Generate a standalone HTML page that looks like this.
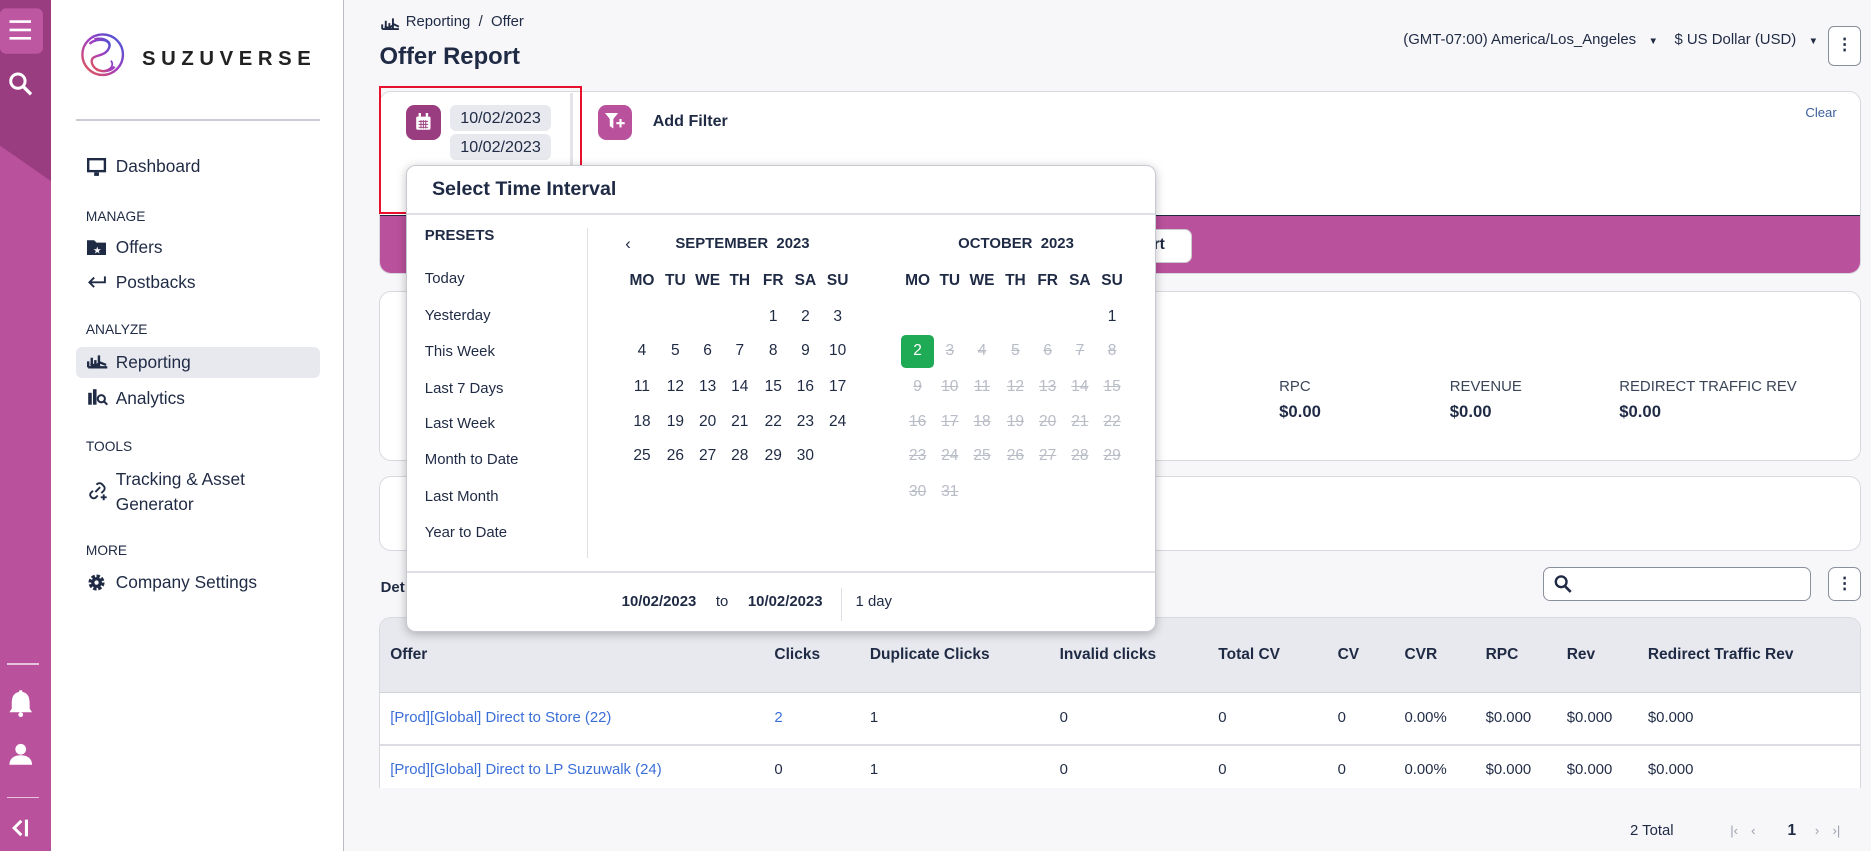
<!DOCTYPE html>
<html><head><meta charset="utf-8"><style>
*{box-sizing:border-box;margin:0;padding:0}
html,body{width:1871px;height:851px;overflow:hidden;background:#f7f7f9}
#r{position:absolute;left:0;top:0;width:1568px;height:713px;zoom:1.19324;font-family:"Liberation Sans",sans-serif;color:#1f2a44;background:#f7f7f9}
.a{position:absolute;white-space:nowrap}
.rail{left:0;top:0;width:43px;height:713px;background:#b9519c}
.side{left:43px;top:0;width:245px;height:713px;background:#fff;border-right:1px solid #b9bcc6}
.nav{font-size:14.5px;color:#1f2a44}
.sec{font-size:11.5px;color:#1f2a44}
.card{background:#fff;border:1px solid #d8d9df;border-radius:10px}
.th{font-size:13px;font-weight:bold;color:#1f2a44}
.td{font-size:12.5px;color:#1f2a44}
.ln{color:#3b6fd8}
.cal{font-size:13px;color:#1f2a44;text-align:center;width:24px}
.dis{color:#b8bcc6;text-decoration:line-through}
.pre{font-size:12.5px;color:#1f2a44}
</style></head><body><div id="r">
<div class="a rail"></div>
<svg class="a" style="left:0;top:0" width="43" height="160"><polygon points="0,0 43,0 43,152 0,122" fill="#9a3d80"/><rect x="0" y="7" width="36" height="38" rx="5" fill="#bd57a1"/><rect x="8" y="17" width="18" height="2.2" fill="#fff"/><rect x="8" y="24" width="18" height="2.2" fill="#fff"/><rect x="8" y="31" width="18" height="2.2" fill="#fff"/><circle cx="15" cy="68" r="6" fill="none" stroke="#fff" stroke-width="2.5"/><line x1="19.5" y1="72.5" x2="26" y2="79" stroke="#fff" stroke-width="2.8"/></svg>
<div class="a" style="left:6px;top:556px;width:27px;height:1px;background:#e6c4dc"></div>
<div class="a" style="left:6px;top:668px;width:27px;height:1px;background:#e6c4dc"></div>
<svg class="a" style="left:6px;top:575px" width="30" height="130"><path d="M10 5a1.5 1.5 0 0 1 3 0c5 1 6 5 6 10v4l2 3H2l2-3v-4c0-5 1-9 6-10z" fill="#fff"/><circle cx="11.5" cy="24" r="2" fill="#fff"/><circle cx="11.5" cy="53" r="4.5" fill="#fff"/><path d="M2 66c0-6 5-8 9.5-8s9.5 2 9.5 8z" fill="#fff"/><path d="M12 113l-6 6 6 6" stroke="#fff" stroke-width="2.5" fill="none"/><rect x="15" y="112" width="2.6" height="14" fill="#fff"/></svg>
<div class="a side"></div>
<svg class="a" style="left:67px;top:27px" width="38" height="38" viewBox="0 0 38 38"><defs><linearGradient id="g" x1="0" y1="1" x2="1" y2="0"><stop offset="0" stop-color="#e8584a"/><stop offset=".5" stop-color="#a33cc0"/><stop offset="1" stop-color="#3a5ad8"/></linearGradient></defs><circle cx="19" cy="19" r="17" fill="none" stroke="url(#g)" stroke-width="2"/><path d="M8 10c6-6 20-4 16 4s-16 4-14 12 14 9 19 3" fill="none" stroke="url(#g)" stroke-width="2"/><path d="M12 6c8-2 16 2 12 8M14 32c8 2 16-2 12-8" fill="none" stroke="url(#g)" stroke-width="1.5"/></svg>
<div class="a" style="left:119px;top:40px;font-size:17px;letter-spacing:4.7px;color:#222;font-weight:bold">SUZUVERSE</div>
<div class="a" style="left:64px;top:100px;width:204px;height:1px;background:#c9cbd3"></div>
<svg class="a" style="left:73px;top:132px" width="18" height="16"><rect x="1" y="1" width="14" height="10" fill="none" stroke="#1f2a44" stroke-width="2"/><rect x="6" y="12" width="4" height="3" fill="#1f2a44"/></svg>
<div class="a nav" style="left:97px;top:131px">Dashboard</div>
<div class="a sec" style="left:72px;top:175px">MANAGE</div>
<svg class="a" style="left:73px;top:200px" width="16" height="14"><path d="M0 1h6l2 2h8v11H0z" fill="#1f2a44"/><text x="5" y="12" font-size="8" fill="#fff">★</text></svg>
<div class="a nav" style="left:97px;top:199px">Offers</div>
<svg class="a" style="left:73px;top:230px" width="16" height="12"><path d="M15 2v5H2M6 3L2 7l4 4" stroke="#1f2a44" stroke-width="1.6" fill="none"/></svg>
<div class="a nav" style="left:97px;top:228px">Postbacks</div>
<div class="a sec" style="left:72px;top:270px">ANALYZE</div>
<div class="a" style="left:64px;top:291px;width:204px;height:26px;background:#e8e9ee;border-radius:5px"></div>
<svg class="a" style="left:73px;top:296px" width="18" height="14"><path d="M1 12V7M4 12V4M7 12V6M10 12V2M1 12h16M3 9l4 2 4-3 5 2" stroke="#1f2a44" stroke-width="2" fill="none"/></svg>
<div class="a nav" style="left:97px;top:295px">Reporting</div>
<svg class="a" style="left:73px;top:325px" width="18" height="16"><rect x="1" y="4" width="3" height="10" fill="#1f2a44"/><rect x="5" y="1" width="3" height="13" fill="#1f2a44"/><circle cx="12" cy="9" r="3" fill="none" stroke="#1f2a44" stroke-width="1.7"/><line x1="14" y1="11" x2="17" y2="14" stroke="#1f2a44" stroke-width="1.7"/></svg>
<div class="a nav" style="left:97px;top:325px">Analytics</div>
<div class="a sec" style="left:72px;top:368px">TOOLS</div>
<svg class="a" style="left:73px;top:402px" width="18" height="18"><path d="M8 4a3 3 0 0 1 5 0l1 1a3 3 0 0 1 0 4l-2 2M9 13l-2 2a3 3 0 0 1-4-4l2-2M7 10l4-4" stroke="#1f2a44" stroke-width="1.6" fill="none"/><path d="M14 12v5M11.5 14.5h5" stroke="#1f2a44" stroke-width="1.6"/></svg>
<div class="a nav" style="left:97px;top:391px;line-height:21px">Tracking &amp; Asset<br>Generator</div>
<div class="a sec" style="left:72px;top:455px">MORE</div>
<svg class="a" style="left:73px;top:480px" width="16" height="16"><circle cx="8" cy="8" r="5" fill="none" stroke="#1f2a44" stroke-width="3.5" stroke-dasharray="2.6 1.3"/><circle cx="8" cy="8" r="4.5" fill="#1f2a44"/><circle cx="8" cy="8" r="1.8" fill="#fff"/></svg>
<div class="a nav" style="left:97px;top:479px">Company Settings</div>

<svg class="a" style="left:319px;top:13px" width="16" height="12"><path d="M1 11V7M4 11V4M7 11V6M10 11V2M1 11h14M3 9l4 1 4-3 4 2" stroke="#1f2a44" stroke-width="1.6" fill="none"/></svg>
<div class="a" style="left:340px;top:12px;font-size:12.5px;color:#1f2a44">Reporting &nbsp;/&nbsp; Offer</div>
<div class="a" style="left:318px;top:36px;font-size:20px;font-weight:bold;color:#1f2a44">Offer Report</div>
<div class="a" style="left:1176px;top:27px;font-size:12.5px;color:#1f2a44">(GMT-07:00) America/Los_Angeles &nbsp;&nbsp;<span style="font-size:8px">▼</span> &nbsp;&nbsp; $ US Dollar (USD) &nbsp;&nbsp;<span style="font-size:8px">▼</span></div>
<div class="a" style="left:1532px;top:22px;width:28px;height:33px;border:1px solid #8a8f9c;border-radius:5px;background:#fff;text-align:center;font-weight:bold;font-size:14px;line-height:30px">⋮</div>

<div class="a card" style="left:318px;top:76px;width:1242px;height:154px;overflow:hidden">
<div class="a" style="left:0;top:103px;width:1242px;height:51px;background:#b9519c;border-top:1px solid #1f2a44"></div>
<div class="a" style="left:620px;top:115px;width:60px;height:29px;background:#fff;border-radius:6px;border:1px solid #ccc"></div>
<div class="a" style="left:640px;top:121px;font-size:13px;font-weight:bold">ort</div>
</div>
<div class="a" style="left:340px;top:88px;width:30px;height:29px;background:#9a3d80;border-radius:7px"></div>
<svg class="a" style="left:348px;top:95px" width="14" height="15"><rect x="1" y="3" width="12" height="11" fill="#fff" rx="1"/><rect x="3" y="0" width="2" height="3" fill="#fff"/><rect x="9" y="0" width="2" height="3" fill="#fff"/><path d="M3 7h8M3 9.5h8M3 12h8M5 6v7M7 6v7M9 6v7" stroke="#9a3d80" stroke-width=".8"/></svg>
<div class="a" style="left:377px;top:88px;width:85px;height:22px;background:#e8e9ee;border-radius:5px;font-size:13.5px;line-height:22px;text-align:center">10/02/2023</div>
<div class="a" style="left:377px;top:112px;width:85px;height:22px;background:#e8e9ee;border-radius:5px;font-size:13.5px;line-height:22px;text-align:center">10/02/2023</div>
<div class="a" style="left:478px;top:78px;width:2px;height:100px;background:#e3e4e8"></div>
<div class="a" style="left:501px;top:88px;width:29px;height:29px;background:#b9519c;border-radius:7px"></div>
<svg class="a" style="left:507px;top:95px" width="18" height="15"><path d="M0 0h11L7 5v8l-3 -2V5z" fill="#fff"/><path d="M13 5v7M9.5 8.5h7" stroke="#fff" stroke-width="1.8"/></svg>
<div class="a" style="left:547px;top:94px;font-size:13.5px;font-weight:bold">Add Filter</div>
<div class="a" style="left:1513px;top:88px;font-size:11px;color:#3b5f9a">Clear</div>
<div class="a" style="left:318px;top:72px;width:170px;height:107px;border:2px solid #e8112d"></div>

<div class="a card" style="left:318px;top:244px;width:1242px;height:142px"></div>
<div class="a" style="left:1072px;top:318px;font-size:12.5px;color:#3a4558">RPC</div>
<div class="a" style="left:1072px;top:337px;font-size:14px;font-weight:bold">$0.00</div>
<div class="a" style="left:1215px;top:318px;font-size:12.5px;color:#3a4558">REVENUE</div>
<div class="a" style="left:1215px;top:337px;font-size:14px;font-weight:bold">$0.00</div>
<div class="a" style="left:1357px;top:318px;font-size:12.5px;color:#3a4558">REDIRECT TRAFFIC REV</div>
<div class="a" style="left:1357px;top:337px;font-size:14px;font-weight:bold">$0.00</div>
<div class="a card" style="left:318px;top:399px;width:1242px;height:63px"></div>
<div class="a" style="left:319px;top:486px;font-size:12.5px;font-weight:bold">Det</div>
<div class="a" style="left:1293px;top:475px;width:225px;height:29px;background:#fff;border:1px solid #8a8f9c;border-radius:6px"></div>
<svg class="a" style="left:1302px;top:481px" width="16" height="17"><circle cx="6" cy="6.5" r="4.5" fill="none" stroke="#1f2a44" stroke-width="2"/><line x1="9" y1="10" x2="14" y2="15" stroke="#1f2a44" stroke-width="2.2"/></svg>
<div class="a" style="left:1532px;top:475px;width:28px;height:29px;border:1px solid #8a8f9c;border-radius:6px;background:#fff;text-align:center;font-weight:bold;font-size:14px;line-height:27px">⋮</div>

<div class="a" style="left:318px;top:517px;width:1242px;height:143px;background:#fff;border:1px solid #d8d9df;border-bottom:none;border-radius:10px 10px 0 0;overflow:hidden">
<div class="a" style="left:0;top:0;width:1242px;height:63px;background:#e8e9ee;border-bottom:1px solid #d0d2d8"></div>
<div class="a" style="left:0;top:106px;width:1242px;height:1px;background:#dcdde2"></div>
</div>
<div class="a th" style="left:327px;top:541px">Offer</div><div class="a th" style="left:649px;top:541px">Clicks</div><div class="a th" style="left:729px;top:541px">Duplicate Clicks</div><div class="a th" style="left:888px;top:541px">Invalid clicks</div><div class="a th" style="left:1021px;top:541px">Total CV</div><div class="a th" style="left:1121px;top:541px">CV</div><div class="a th" style="left:1177px;top:541px">CVR</div><div class="a th" style="left:1245px;top:541px">RPC</div><div class="a th" style="left:1313px;top:541px">Rev</div><div class="a th" style="left:1381px;top:541px">Redirect Traffic Rev</div>
<div class="a td ln" style="left:327px;top:595px">[Prod][Global] Direct to Store (22)</div><div class="a td ln" style="left:649px;top:595px">2</div><div class="a td" style="left:729px;top:595px">1</div><div class="a td" style="left:888px;top:595px">0</div><div class="a td" style="left:1021px;top:595px">0</div><div class="a td" style="left:1121px;top:595px">0</div><div class="a td" style="left:1177px;top:595px">0.00%</div><div class="a td" style="left:1245px;top:595px">$0.000</div><div class="a td" style="left:1313px;top:595px">$0.000</div><div class="a td" style="left:1381px;top:595px">$0.000</div>
<div class="a td ln" style="left:327px;top:639px">[Prod][Global] Direct to LP Suzuwalk (24)</div><div class="a td" style="left:649px;top:639px">0</div><div class="a td" style="left:729px;top:639px">1</div><div class="a td" style="left:888px;top:639px">0</div><div class="a td" style="left:1021px;top:639px">0</div><div class="a td" style="left:1121px;top:639px">0</div><div class="a td" style="left:1177px;top:639px">0.00%</div><div class="a td" style="left:1245px;top:639px">$0.000</div><div class="a td" style="left:1313px;top:639px">$0.000</div><div class="a td" style="left:1381px;top:639px">$0.000</div>
<div class="a" style="left:1366px;top:690px;font-size:12.5px">2 Total</div>
<div class="a" style="left:1450px;top:690px;font-size:11px;color:#9aa0ad;word-spacing:8px">|‹ ‹</div>
<div class="a" style="left:1498px;top:689px;font-size:13px;font-weight:bold">1</div>
<div class="a" style="left:1521px;top:690px;font-size:11px;color:#9aa0ad;word-spacing:8px">› ›|</div>

<div class="a" style="left:340px;top:138px;width:629px;height:392px;background:#fff;border:1px solid #c7c9d0;border-radius:8px;box-shadow:0 2px 8px rgba(0,0,0,.25)">
<div class="a" style="left:0;top:40px;width:627px;height:1px;background:#dfe0e5"></div>
<div class="a" style="left:0;top:340px;width:627px;height:1px;background:#dfe0e5"></div>
<div class="a" style="left:151px;top:52px;width:1px;height:277px;background:#dfe0e5"></div>
<div class="a" style="left:364px;top:354px;width:1px;height:28px;background:#dfe0e5"></div>
</div>
<div class="a" style="left:362px;top:149px;font-size:16.5px;font-weight:bold;color:#1f2a44">Select Time Interval</div>
<div class="a pre" style="left:356px;top:191px;font-weight:bold">PRESETS</div>
<div class="a pre" style="left:356px;top:227px">Today</div>
<div class="a pre" style="left:356px;top:258px">Yesterday</div>
<div class="a pre" style="left:356px;top:288px">This Week</div>
<div class="a pre" style="left:356px;top:319px">Last 7 Days</div>
<div class="a pre" style="left:356px;top:349px">Last Week</div>
<div class="a pre" style="left:356px;top:379px">Month to Date</div>
<div class="a pre" style="left:356px;top:410px">Last Month</div>
<div class="a pre" style="left:356px;top:440px">Year to Date</div>
<div class="a" style="left:524px;top:196px;font-size:14px">‹</div>
<div class="a" style="left:566px;top:198px;font-size:12.5px;font-weight:bold">SEPTEMBER &nbsp;2023</div>
<div class="a" style="left:803px;top:198px;font-size:12.5px;font-weight:bold">OCTOBER &nbsp;2023</div>
<div class="a" style="left:755px;top:281px;width:28px;height:27px;background:#1faa55;border-radius:4px"></div>
<div id="cal"></div>
<div class="a" style="left:521px;top:498px;font-size:12.5px;word-spacing:2px"><b>10/02/2023</b> &nbsp; to &nbsp; <b>10/02/2023</b></div>
<div class="a" style="left:717px;top:498px;font-size:12.5px">1 day</div>
<script>
var h='',sx=[538,566,593,620,648,675,702],ox=[769,796,823,851,878,905,932],ry=[228,258,287,317,346,375,405],hd=['MO','TU','WE','TH','FR','SA','SU'];
function c(x,y,t,cl,st){h+='<div class="a cal '+(cl||'')+'" style="left:'+(x-12)+'px;top:'+y+'px;'+(st||'')+'">'+t+'</div>';}
for(var i=0;i<7;i++){c(sx[i],ry[0],hd[i],'','font-weight:bold');c(ox[i],ry[0],hd[i],'','font-weight:bold');}
var d=1;for(var r=1;r<=5;r++)for(i=0;i<7;i++){if(r==1&&i<4)continue;if(d<=30){c(sx[i],ry[r],d);d++;}}
c(ox[6],ry[1],1);d=2;for(r=2;r<=6;r++)for(i=0;i<7;i++){if(d<=31){if(d==2)c(ox[i],ry[r],2,'','color:#fff');else c(ox[i],ry[r],d,'dis');d++;}}
document.getElementById('cal').innerHTML=h;
</script>
</div></body></html>
